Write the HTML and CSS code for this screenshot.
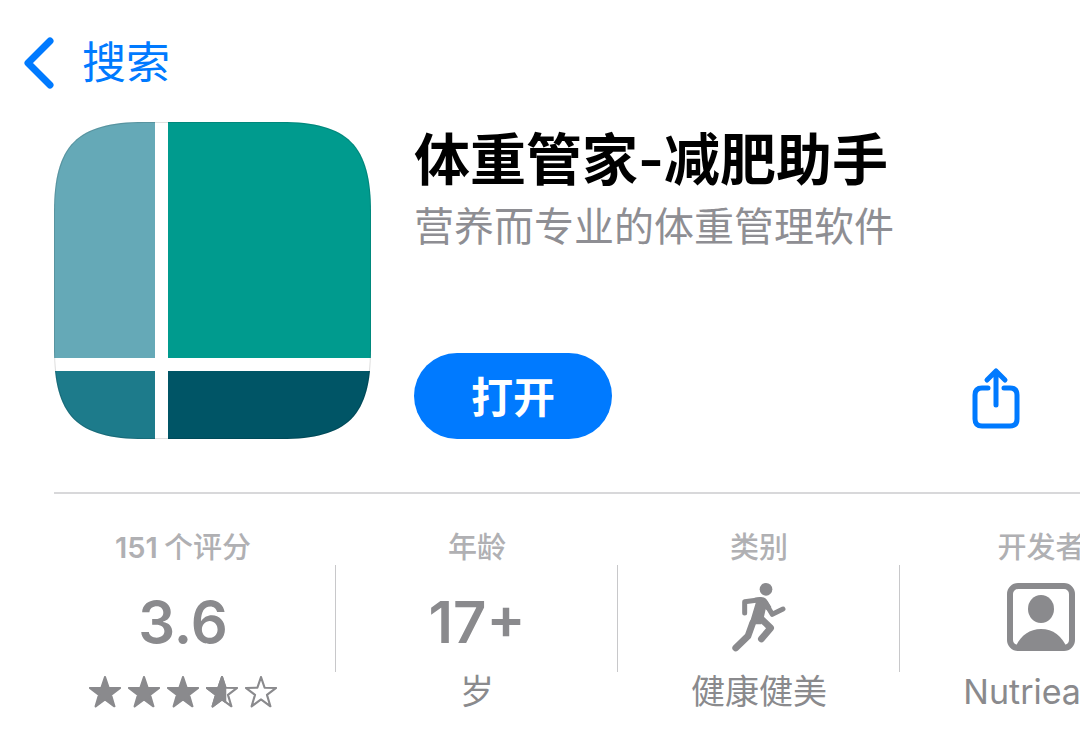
FILE: index.html
```html
<!DOCTYPE html>
<html lang="zh-CN">
<head>
    <meta charset="UTF-8">
    <meta name="viewport" content="width=device-width, initial-scale=1.0">
    <title>体重管家-减肥助手</title>
    <link rel="stylesheet" href="styles.css">
</head>
<body>
    <!-- Navigation -->
    <nav class="nav">
        <a class="back" href="#">
            <svg class="back-icon" width="32" height="52" viewBox="0 0 32 52" aria-hidden="true">
                <path d="M28 4 L6 26 L28 48"/>
            </svg>
            <span>搜索</span>
        </a>
    </nav>

    <!-- App header -->
    <header class="app">
        <svg class="app-icon" width="317" height="317" viewBox="0 0 317 317" aria-hidden="true">
            <defs>
                <clipPath id="iconShape">
                    <path d="M0 90 C0 23 23 0 90 0 H227 C294 0 317 23 317 90 V227 C317 294 294 317 227 317 H90 C23 317 0 294 0 227 Z"/>
                </clipPath>
            </defs>
            <g clip-path="url(#iconShape)">
                <rect width="317" height="317" fill="#fff"/>
                <rect width="101" height="236" fill="#65a9b7"/>
                <rect x="114" width="203" height="236" fill="#009b8e"/>
                <rect y="249" width="101" height="68" fill="#1d7b8b"/>
                <rect x="114" y="249" width="203" height="68" fill="#005566"/>
                <path d="M0 90 C0 23 23 0 90 0 H227 C294 0 317 23 317 90 V227 C317 294 294 317 227 317 H90 C23 317 0 294 0 227 Z" fill="none" stroke="#000" stroke-opacity="0.12" stroke-width="2"/>
            </g>
        </svg>
        <div class="app-info">
            <h1>体重管家-减肥助手</h1>
            <p class="subtitle">营养而专业的体重管理软件</p>
            <div class="actions">
                <button class="open" type="button">打开</button>
                <button class="share" type="button" aria-label="分享">
                    <svg width="48" height="62" viewBox="0 0 48 62" aria-hidden="true">
                        <path d="M16 21 H10 Q3 21 3 28 V52 Q3 59 10 59 H38 Q45 59 45 52 V28 Q45 21 38 21 H32"/>
                        <path d="M24 38 V4 M15 13 L24 4 L33 13"/>
                    </svg>
                </button>
            </div>
        </div>
    </header>

    <!-- Facts strip -->
    <section class="facts">
        <div class="fact">
            <div class="label"><span class="count">151</span>个评分</div>
            <div class="value">3.6</div>
            <div class="stars">
                <svg width="32" height="32" viewBox="1 1 30 30"><path class="full" d="M16 2 L19.4 12 L30.2 12.2 L21.6 18.7 L24.8 29.4 L16 23 L7.2 29.4 L10.4 18.7 L1.8 12.2 L12.6 12 Z"/></svg>
                <svg width="32" height="32" viewBox="1 1 30 30"><path class="full" d="M16 2 L19.4 12 L30.2 12.2 L21.6 18.7 L24.8 29.4 L16 23 L7.2 29.4 L10.4 18.7 L1.8 12.2 L12.6 12 Z"/></svg>
                <svg width="32" height="32" viewBox="1 1 30 30"><path class="full" d="M16 2 L19.4 12 L30.2 12.2 L21.6 18.7 L24.8 29.4 L16 23 L7.2 29.4 L10.4 18.7 L1.8 12.2 L12.6 12 Z"/></svg>
                <svg width="32" height="32" viewBox="1 1 30 30"><path d="M16 2 L19.4 12 L30.2 12.2 L21.6 18.7 L24.8 29.4 L16 23 L7.2 29.4 L10.4 18.7 L1.8 12.2 L12.6 12 Z"/><path class="full" d="M16 2 L19 11.5 V25 L16 23 L7.2 29.4 L10.4 18.7 L1.8 12.2 L12.6 12 Z"/></svg>
                <svg width="32" height="32" viewBox="1 1 30 30"><path d="M16 2 L19.4 12 L30.2 12.2 L21.6 18.7 L24.8 29.4 L16 23 L7.2 29.4 L10.4 18.7 L1.8 12.2 L12.6 12 Z"/></svg>
            </div>
        </div>
        <div class="fact">
            <div class="label">年龄</div>
            <div class="value">17+</div>
            <div class="note">岁</div>
        </div>
        <div class="fact">
            <div class="label">类别</div>
            <div class="value">
                <svg class="runner" width="54" height="69" viewBox="36 28 162 207" aria-hidden="true">
                    <circle cx="138" cy="47" r="19"/>
                    <path class="body" d="M104 72 L120 70 Q136 69 143 82 L154 100 L148 114 L137 107 L131 134 L124 152 L88 152 L107 88 Z"/>
                    <path class="limb" d="M74 118 V84 L120 78 M135 86 L157 122 L189 106"/>
                    <path class="leg" d="M98 148 L84 187 L47 223 M118 130 L152 163 L124 196"/>
                </svg>
            </div>
            <div class="note">健康健美</div>
        </div>
        <div class="fact">
            <div class="label">开发者</div>
            <div class="value">
                <svg class="person" width="68" height="68" viewBox="0 0 68 68" aria-hidden="true">
                    <rect x="3" y="3" width="62" height="62" rx="8"/>
                    <ellipse cx="34" cy="26" rx="13" ry="14"/>
                    <path d="M8 65 C13 53 22 46 34 46 C46 46 55 53 60 65 Z"/>
                </svg>
            </div>
            <div class="note">Nutriease</div>
        </div>
    </section>
</body>
</html>
```

FILE: styles.css
```css
* {
    box-sizing: border-box;
}
body {
    font-family: Inter, "Noto Sans CJK SC", sans-serif;
    margin: 0;
    padding: 0;
    background-color: #fff;
    color: #000;
    overflow-x: hidden;
}
svg {
    display: block;
}
h1, p {
    margin: 0;
}
button {
    font-family: inherit;
    border: none;
    padding: 0;
    cursor: pointer;
}

/* Navigation */
.nav {
    display: flex;
    padding: 33px 22px 0;
}
.back {
    display: flex;
    align-items: center;
    gap: 28px;
    height: 60px;
    color: #007aff;
    font-size: 44px;
    line-height: 60px;
    text-decoration: none;
}
.back-icon {
    fill: none;
    stroke: #007aff;
    stroke-width: 7;
    stroke-linecap: round;
    stroke-linejoin: round;
}

/* App header */
.app {
    display: flex;
    gap: 43px;
    margin-left: 54px;
    padding: 29px 60px 53px 0;
    border-bottom: 2px solid #d8d8da;
}
.app-icon {
    flex: none;
}
.app-info {
    display: flex;
    flex-direction: column;
    flex: 1;
}
h1 {
    font-size: 56px;
    font-weight: 600;
    line-height: 76px;
}
.subtitle {
    color: #8e8e93;
    font-size: 40px;
    line-height: 58px;
}
.actions {
    display: flex;
    justify-content: space-between;
    align-items: flex-end;
    margin-top: auto;
}
.open {
    width: 198px;
    height: 86px;
    padding-bottom: 4px;
    border-radius: 43px;
    background-color: #007aff;
    color: #fff;
    font-size: 42px;
    font-weight: 600;
}
.share {
    background: none;
    padding-bottom: 10px;
}
.share svg {
    fill: none;
    stroke: #007aff;
    stroke-width: 5;
    stroke-linecap: round;
    stroke-linejoin: round;
}

/* Facts strip */
.facts {
    display: flex;
    padding: 34px 0 24px 54px;
    color: #8a8a8d;
    overflow: hidden;
}
.fact {
    display: flex;
    flex-direction: column;
    align-items: center;
    flex: 0 0 282px;
    text-align: center;
    background: linear-gradient(#c8c8ca, #c8c8ca) no-repeat right 37px / 1px 107px;
}
.fact:first-child {
    flex-basis: 306px;
    margin-left: -24px;
}
.label {
    color: #b0b0b3;
    font-size: 29px;
    font-weight: 500;
    line-height: 40px;
}
.count {
    margin-right: 6px;
    font-weight: 600;
}
.value {
    display: flex;
    justify-content: center;
    align-items: center;
    height: 108px;
    font-size: 58px;
    font-weight: 600;
}
.value svg {
    margin-bottom: 10px;
}
.note {
    font-size: 34px;
    line-height: 32px;
}
.stars {
    display: flex;
    align-items: center;
    gap: 7px;
    height: 32px;
}
.stars path {
    fill: none;
    stroke: #8a8a8d;
    stroke-width: 2;
    stroke-linejoin: round;
}
.stars .full {
    fill: #8a8a8d;
}
.runner circle,
.runner .body {
    fill: #8a8a8d;
}
.runner .limb,
.runner .leg {
    fill: none;
    stroke: #8a8a8d;
    stroke-width: 15;
    stroke-linecap: round;
    stroke-linejoin: round;
}
.runner .leg {
    stroke-width: 20;
}
.person {
    fill: #8a8a8d;
}
.person rect {
    fill: none;
    stroke: #8a8a8d;
    stroke-width: 6;
}
```
